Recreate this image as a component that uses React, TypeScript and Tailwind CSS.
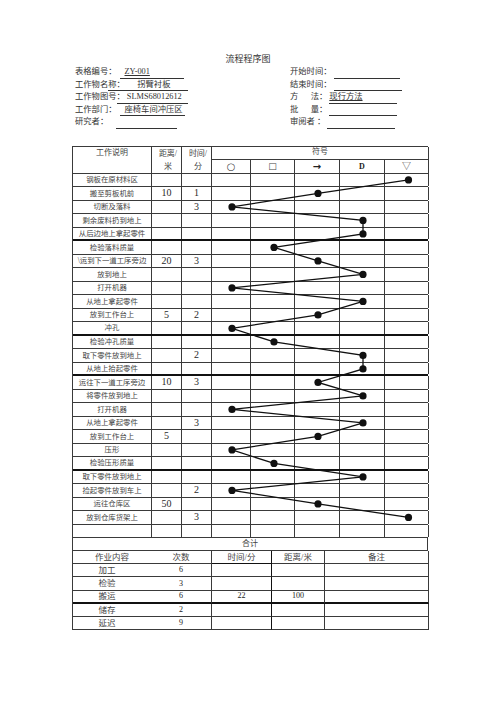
import React from "react";

type Sym = "O" | "S" | "A" | "D" | "V" | "";

const rows: { desc: string; dist?: string; time?: string; sym: Sym; thick?: boolean }[] = [
  { desc: "钢板在原材料区", sym: "V" },
  { desc: "搬至剪板机前", dist: "10", time: "1", sym: "A" },
  { desc: "切断及落料", time: "3", sym: "O" },
  { desc: "剩余废料扔到地上", sym: "D" },
  { desc: "从后边地上拿起零件", sym: "D", thick: true },
  { desc: "检验落料质量", sym: "S" },
  { desc: "\\运到下一道工序旁边", dist: "20", time: "3", sym: "A" },
  { desc: "放到地上", sym: "D" },
  { desc: "打开机器", sym: "O" },
  { desc: "从地上拿起零件", sym: "D" },
  { desc: "放到工作台上", dist: "5", time: "2", sym: "A" },
  { desc: "冲孔", sym: "O", thick: true },
  { desc: "检验冲孔质量", sym: "S" },
  { desc: "取下零件放到地上", time: "2", sym: "D" },
  { desc: "从地上拾起零件", sym: "D", thick: true },
  { desc: "运往下一道工序旁边", dist: "10", time: "3", sym: "A" },
  { desc: "将零件放到地上", sym: "D" },
  { desc: "打开机器", sym: "O" },
  { desc: "从地上拿起零件", time: "3", sym: "D" },
  { desc: "放到工作台上", dist: "5", sym: "A" },
  { desc: "压形", sym: "O" },
  { desc: "检验压形质量", sym: "S", thick: true },
  { desc: "取下零件放到地上", sym: "D" },
  { desc: "捡起零件放到车上", time: "2", sym: "O" },
  { desc: "运往仓库区", dist: "50", sym: "A" },
  { desc: "放到仓库货架上", time: "3", sym: "V" },
  { desc: "", sym: "" },
];

const summary = [
  { name: "加工", count: "6" },
  { name: "检验", count: "3" },
  { name: "搬运", count: "6", time: "22", dist: "100", thick: true },
  { name: "储存", count: "2" },
  { name: "延迟", count: "9" },
];

// column centres inside the symbol area (x from 211)
const symX: Record<string, number> = { O: 20, S: 62, A: 106, D: 151, V: 196.5 };
const ROW = 13.5;

const FlowChart = () => {
  const pts = rows
    .map((r, i) => (r.sym ? [symX[r.sym], i * ROW + 5.9] : null))
    .filter(Boolean) as number[][];
  return (
    <svg
      className="absolute left-[139px] top-0 pointer-events-none"
      width={217}
      height={rows.length * ROW}
    >
      <polyline
        points={pts.map((p) => p.join(",")).join(" ")}
        fill="none"
        stroke="#111"
        strokeWidth={1.3}
      />
      {pts.map((p, i) => (
        <circle key={i} cx={p[0]} cy={p[1]} r={3.6} fill="#111" />
      ))}
    </svg>
  );
};

const cols = "grid grid-cols-[79px_30px_30px_39px_44px_45px_45px_44px]";
const cell = "border-r border-[#3a3a3a] flex items-center justify-center";

const App = () => {
  return (
    <div
      className="w-[500px] h-[707px] bg-white text-[#2a2a2a] relative"
      style={{ fontFamily: '"Liberation Serif", "Noto Sans CJK SC", serif' }}
    >
      {/* title */}
      <div className="pt-[53px] h-[66px] text-center text-[9px] leading-[12px] pr-[4px] text-[#333]">流程程序图</div>

      {/* info block */}
      <div className="flex pl-[75px] text-[8.3px] leading-[12.5px] text-[#333]">
        <div className="w-[215px] flex flex-col">
          <div className="flex">
            <span>表格编号：</span>
            <span className="ml-[3px] w-[64px] border-b border-[#333] leading-[11px] pl-[5px] underline">ZY-001</span>
          </div>
          <div className="flex">
            <span>工作物名</span>
            <span className="w-[80px] border-b border-[#333] leading-[11px] whitespace-pre">称：      拐臂衬板</span>
          </div>
          <div className="flex">
            <span>工作物图号</span>
            <span className="w-[71px] border-b border-[#333] leading-[11px] whitespace-pre">： SLMS68012612</span>
          </div>
          <div className="flex">
            <span>工作部门：</span>
            <span className="ml-[3px] w-[65px] border-b border-[#333] leading-[11px] pl-[5px] whitespace-nowrap">座椅车间冲压区</span>
          </div>
          <div className="flex">
            <span>研究者：</span>
            <span className="ml-[8px] w-[61px] border-b border-[#333] leading-[11px]"></span>
          </div>
        </div>
        <div className="flex flex-col">
          <div className="flex">
            <span>开始时间：</span>
            <span className="ml-[2px] w-[66px] border-b border-[#333] leading-[11px]"></span>
          </div>
          <div className="flex">
            <span>结束时间：</span>
            <span className="ml-[2px] w-[68px] border-b border-[#333] leading-[11px]"></span>
          </div>
          <div className="flex">
            <span className="whitespace-pre">方      法：</span>
            <span className="ml-[2px] w-[68px] border-b border-[#333] leading-[11px] underline">现行方法</span>
          </div>
          <div className="flex">
            <span className="whitespace-pre">批      量：</span>
            <span className="ml-[2px] w-[68px] border-b border-[#333] leading-[11px]"></span>
          </div>
          <div className="flex">
            <span className="whitespace-pre">审阅者 ：</span>
            <span className="ml-[2px] w-[68px] border-b border-[#333] leading-[11px]"></span>
          </div>
        </div>
      </div>

      {/* main table */}
      <div className="ml-[72px] mt-[17px] w-[356px] border-l border-t border-[#3a3a3a]">
        <div className={`${cols} grid-rows-[13.5px_13.5px] text-[8px] leading-[9px] text-[#444]`}>
          <div className="row-span-2 border-r border-b border-[#3a3a3a] text-center pt-[1px]">工作说明</div>
          <div className="row-span-2 border-r border-b border-[#3a3a3a] flex flex-col items-center justify-around pl-[3px]">
            <span>距离/</span>
            <span>米</span>
          </div>
          <div className="row-span-2 border-r border-b border-[#3a3a3a] flex flex-col items-center justify-around pl-[3px]">
            <span>时间/</span>
            <span>分</span>
          </div>
          <div className="col-span-5 border-r border-b border-[#3a3a3a] text-center">符号</div>
          <div className={`${cell} border-b text-[10px] font-['DejaVu_Sans']`}>○</div>
          <div className={`${cell} border-b text-[9px] font-['DejaVu_Sans']`}>□</div>
          <div className={`${cell} border-b text-[10px] font-bold font-['DejaVu_Sans'] text-[#222]`}>→</div>
          <div className={`${cell} border-b font-bold text-[8px] text-[#222]`}>D</div>
          <div className={`${cell} border-b text-[9px]`}>▽</div>
        </div>

        <div className="relative">
          {rows.map((r, i) => (
            <div
              key={i}
              className={`${cols} h-[13.5px] ${
                r.thick ? "border-b-2 border-[#111]" : "border-b border-[#3a3a3a]"
              }`}
            >
              <div className={`${cell} text-[7.4px] whitespace-nowrap text-[#444]`}>{r.desc}</div>
              <div className={`${cell} text-[10px] leading-none`}>{r.dist}</div>
              <div className={`${cell} text-[10px] leading-none`}>{r.time}</div>
              <div className={cell}></div>
              <div className={cell}></div>
              <div className={cell}></div>
              <div className={cell}></div>
              <div className={cell}></div>
            </div>
          ))}
          <FlowChart />
        </div>

        <div className="h-[13px] border-r border-b border-[#3a3a3a] flex items-center justify-center text-[8px] text-[#444]">合计</div>

        <div className="grid grid-cols-[78px_61px_60px_53px_104px] text-[8.5px] text-[#444]">
          {[
            { t: "作业内容", c: "" },
            { t: "次数", c: "border-r border-[#3a3a3a]" },
            { t: "时间/分", c: "border-r border-[#111]" },
            { t: "距离/米", c: "border-r border-[#3a3a3a]" },
            { t: "备注", c: "border-r border-[#3a3a3a]" },
          ].map((h) => (
            <div key={h.t} className={`h-[13.3px] border-b border-[#3a3a3a] flex items-center justify-center ${h.c}`}>
              {h.t}
            </div>
          ))}
          {summary.map((s) => {
            const b = s.thick ? "border-b-2 border-b-[#111]" : "border-b border-b-[#3a3a3a]";
            return (
              <React.Fragment key={s.name}>
                <div className={`h-[13.2px] ${b} flex items-center justify-center pr-[10px]`}>{s.name}</div>
                <div className={`h-[13.2px] ${b} border-r border-r-[#3a3a3a] flex items-center justify-center text-[8px] text-[#222]`}>{s.count}</div>
                <div className={`h-[13.2px] ${b} border-r border-r-[#111] flex items-center justify-center text-[8px] text-[#222]`}>{s.time}</div>
                <div className={`h-[13.2px] ${b} border-r border-r-[#3a3a3a] flex items-center justify-center text-[8px] text-[#222]`}>{s.dist}</div>
                <div className={`h-[13.2px] ${b} border-r border-r-[#3a3a3a]`}></div>
              </React.Fragment>
            );
          })}
        </div>
      </div>
    </div>
  );
};

export default App;
